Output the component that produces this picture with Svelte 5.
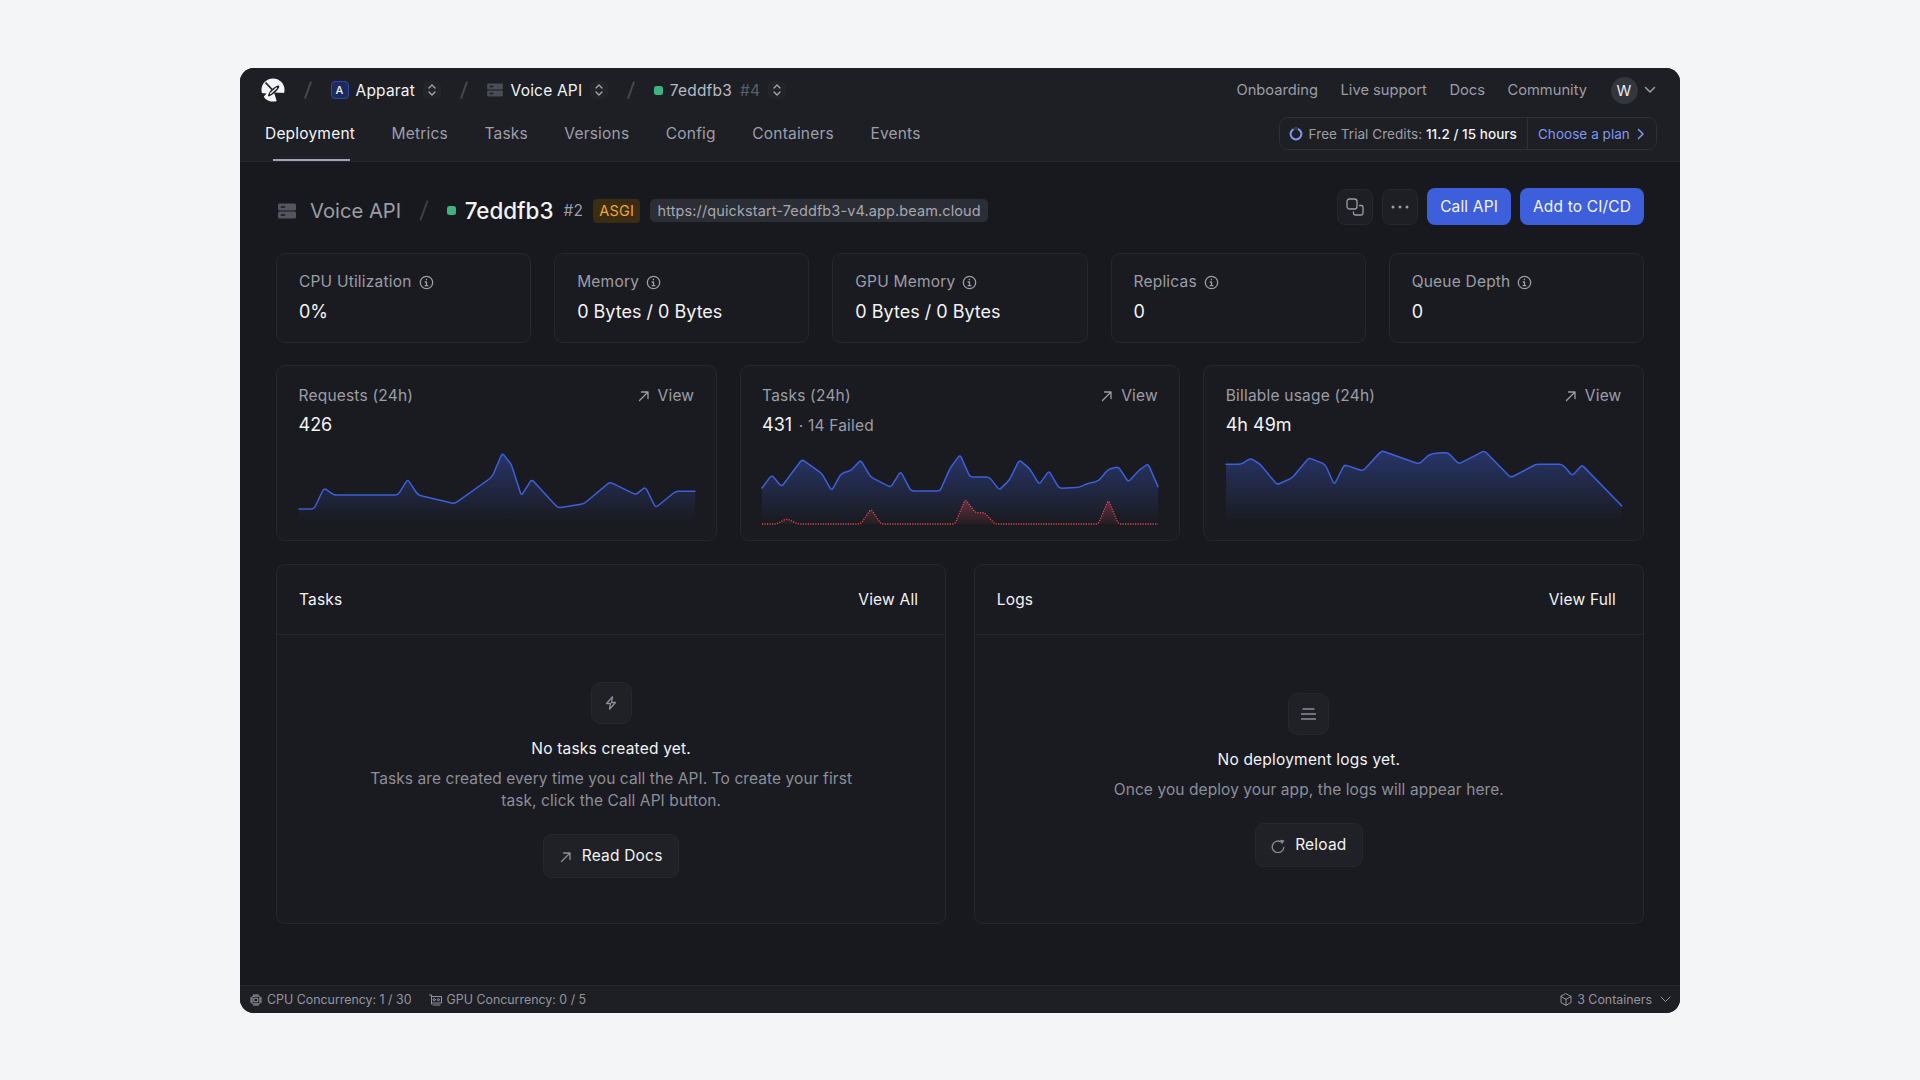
<script>
  const stats = [
    { label: 'CPU Utilization', value: '0%' },
    { label: 'Memory', value: '0 Bytes / 0 Bytes' },
    { label: 'GPU Memory', value: '0 Bytes / 0 Bytes' },
    { label: 'Replicas', value: '0' },
    { label: 'Queue Depth', value: '0' }
  ];

  const tabs = ['Deployment', 'Metrics', 'Tasks', 'Versions', 'Config', 'Containers', 'Events'];

  // points are read off the 3x crop, so one svg unit is a third of a pixel
  const charts = [
    {
      id: 'a', label: 'Requests (24h)', value: '426', x0: 85,
      line: [[85,450],[130,450],[160,387],[190,408],[382,408],[411,361],[442,408],[552,434],[664,354],[695,282],[722,316],[752,410],[783,361],[862,447],[940,434],[1018,369],[1095,407],[1124,384],[1155,446],[1215,397],[1273,397]]
    },
    {
      id: 'b', label: 'Tasks (24h)', value: '431', failed: '14 Failed', x0: 96,
      line: [[96,384],[125,345],[155,380],[216,298],[275,340],[305,392],[334,340],[362,332],[392,300],[422,351],[482,382],[512,334],[543,393],[630,393],[660,325],[690,284],[720,351],[778,351],[808,390],[838,360],[868,300],[898,325],[928,373],[957,332],[987,385],[1047,382],[1075,370],[1105,363],[1135,328],[1165,320],[1195,366],[1225,333],[1254,311],[1284,380]],
      red: [[96,492],[140,492],[170,476],[205,492],[392,492],[423,447],[453,492],[675,492],[706,418],[736,458],[763,458],[795,492],[1105,492],[1135,420],[1165,492],[1284,492]]
    },
    {
      id: 'c', label: 'Billable usage (24h)', value: '4h 49m', x0: 107,
      line: [[107,316],[151,316],[181,298],[210,316],[260,377],[305,357],[356,296],[404,316],[432,377],[462,317],[518,336],[574,275],[686,315],[716,287],[745,281],[774,281],[805,315],[882,275],[961,356],[1037,316],[1116,316],[1146,350],[1175,318],[1294,440]]
    }
  ];

  function smooth(p) {
    let d = `M${p[0][0]} ${p[0][1]}`;
    for (let i = 1; i < p.length - 1; i++) {
      const [x, y] = p[i];
      const a = p[i - 1], b = p[i + 1];
      const la = Math.hypot(a[0] - x, a[1] - y), lb = Math.hypot(b[0] - x, b[1] - y);
      const r = Math.min(9, la / 2, lb / 2);
      d += `L${x + (a[0] - x) * r / la} ${y + (a[1] - y) * r / la}`;
      d += `Q${x} ${y} ${x + (b[0] - x) * r / lb} ${y + (b[1] - y) * r / lb}`;
    }
    const e = p[p.length - 1];
    return d + `L${e[0]} ${e[1]}`;
  }

  function area(p, base) {
    return `${smooth(p)}L${p[p.length - 1][0]} ${base}L${p[0][0]} ${base}Z`;
  }
</script>

{#snippet chevrons()}
  <span class="updown">
    <svg width="10" height="14" viewBox="0 0 10 14"><path d="M2 5l3-3 3 3M2 9l3 3 3-3" /></svg>
  </span>
{/snippet}

{#snippet stack(w, h)}
  <svg class="stack" width={w} height={h} viewBox="0 0 18 16"><rect x="0" y="0.5" width="18" height="7" rx="1.5" /><rect x="0" y="8.5" width="18" height="7" rx="1.5" /><path class="dots" d="M3.5 4h3M3.5 12h3" /></svg>
{/snippet}

{#snippet arrow()}
  <svg class="arrow" width="12" height="12" viewBox="0 0 12 12"><path d="M1.5 10.5L10 2M3.5 2H10v6.5" /></svg>
{/snippet}

{#snippet info()}
  <svg class="info" width="15" height="15" viewBox="0 0 15 15"><circle cx="7.5" cy="7.5" r="6.2" /><path d="M7.5 7v3.6M6.2 7h1.3M6.2 10.7h2.6" /><circle class="dot" cx="7.4" cy="4.6" r="0.8" /></svg>
{/snippet}

<div class="page">
  <div class="window">
    <header>
      <div class="topbar">
        <div class="crumbs">
          <svg class="logo" width="24" height="24" viewBox="0 0 24 24">
            <circle class="w" cx="12" cy="12" r="11.5" />
            <path class="k" d="M13 14.500L24 15V20L18 24H16z" />
            <path class="k" d="M0 15L5.500 15.500 2 19.500H0z" />
            <path class="line" d="M4.500 4.500L11 11.500" />
            <path class="k" d="M7 18C7.500 14 12 9 17 7.500 18.500 7 18.500 8.500 18 9.500 16 13.500 11.500 17 8 18.500z" />
            <path class="cut" d="M9.500 15.500L15.500 10" />
          </svg>
          <span class="slash"></span>
          <span class="avatar-a">A</span>
          <span class="crumb">Apparat</span>
          {@render chevrons()}
          <span class="slash"></span>
          {@render stack(16, 14)}
          <span class="crumb">Voice API</span>
          {@render chevrons()}
          <span class="slash"></span>
          <span class="green"></span>
          <span class="crumb muted">7eddfb3</span>
          <span class="crumb faint">#4</span>
          {@render chevrons()}
        </div>
        <nav class="links">
          <span>Onboarding</span>
          <span>Live support</span>
          <span>Docs</span>
          <span>Community</span>
          <span class="user">W</span>
          <svg class="caret" width="12" height="8" viewBox="0 0 12 8"><path d="M1.5 1.5L6 6l4.5-4.5" /></svg>
        </nav>
      </div>
      <div class="tabbar">
        <div class="tabs">
          {#each tabs as t, i}
            <span class="tab" class:active={i === 0}>{t}</span>
          {/each}
        </div>
        <div class="credits">
          <div class="credit-info">
            <svg class="ring" width="14" height="14" viewBox="0 0 14 14"><circle class="ring-blue" cx="7" cy="7" r="5.4" /><path class="ring-gap" d="M4.500 2.200A5.400 5.400 0 0 1 9 2" /></svg>
            <span>Free Trial Credits: <b>11.2 / 15 hours</b></span>
          </div>
          <div class="plan">
            <span>Choose a plan</span>
            <svg width="8" height="12" viewBox="0 0 8 12"><path d="M1.5 1.5L6 6l-4.500 4.500" /></svg>
          </div>
        </div>
      </div>
    </header>

    <main>
      <div class="title-row">
        <div class="title">
          {@render stack(18, 16)}
          <span class="app-name">Voice API</span>
          <span class="title-slash"></span>
          <span class="green big"></span>
          <span class="hash">7eddfb3</span>
          <span class="num">#2</span>
          <span class="asgi">ASGI</span>
          <span class="url">https://quickstart-7eddfb3-v4.app.beam.cloud</span>
        </div>
        <div class="actions">
          <button class="icon-btn" aria-label="Copy">
            <svg width="18" height="18" viewBox="0 0 18 18"><rect x="1" y="1" width="10" height="10" rx="2.500" /><path d="M13.500 7.500h1.700a1.800 1.800 0 0 1 1.800 1.800v5.900a1.800 1.800 0 0 1-1.800 1.800H9.300a1.800 1.800 0 0 1-1.800-1.800V14" /></svg>
          </button>
          <button class="icon-btn" aria-label="More">
            <svg width="18" height="4" viewBox="0 0 18 4"><circle class="fill" cx="2" cy="2" r="1.500" /><circle class="fill" cx="9" cy="2" r="1.500" /><circle class="fill" cx="16" cy="2" r="1.500" /></svg>
          </button>
          <button class="primary">Call API</button>
          <button class="primary">Add to CI/CD</button>
        </div>
      </div>

      <div class="stats">
        {#each stats as s}
          <div class="card stat">
            <div class="label">{s.label} {@render info()}</div>
            <div class="value">{s.value}</div>
          </div>
        {/each}
      </div>

      <div class="charts">
        {#each charts as c}
          <div class="card chart">
            <div class="chart-head">
              <span class="label">{c.label}</span>
              <span class="view">{@render arrow()} View</span>
            </div>
            <div class="value">{c.value}{#if c.failed}<span class="failed">&nbsp;·&nbsp;{c.failed}</span>{/if}</div>
            <svg class="spark" width="398" height="72" viewBox="{c.x0 - 3} 270 1194 216">
              <defs>
                <linearGradient id="blue-{c.id}" x1="0" y1="0" x2="0" y2="1">
                  <stop offset="0" stop-color="#3d5fdc" stop-opacity="0.38" />
                  <stop offset="1" stop-color="#3d5fdc" stop-opacity="0" />
                </linearGradient>
                <linearGradient id="red-{c.id}" x1="0" y1="0" x2="0" y2="1">
                  <stop offset="0" stop-color="#e5484d" stop-opacity="0.32" />
                  <stop offset="1" stop-color="#e5484d" stop-opacity="0.06" />
                </linearGradient>
              </defs>
              <path d={area(c.line, 486)} style="fill: url(#blue-{c.id})" />
              {#if c.red}
                <path d={area(c.red, 492)} style="fill: url(#red-{c.id})" />
                <path d={smooth(c.red)} class="red-line" />
              {/if}
              <path d={smooth(c.line)} class="blue-line" />
            </svg>
          </div>
        {/each}
      </div>

      <div class="panels">
        <section class="card panel">
          <div class="panel-head">
            <span>Tasks</span>
            <span class="panel-link">View All</span>
          </div>
          <div class="empty">
            <div class="empty-icon">
              <svg width="12" height="14" viewBox="0 0 12 14"><path d="M7.500 0.800L1.500 7.500H5.500L4.500 13.200L10.500 6.500H6.500Z" /></svg>
            </div>
            <p class="empty-title">No tasks created yet.</p>
            <p class="empty-text">Tasks are created every time you call the API. To create your first task, click the Call API button.</p>
            <button class="ghost">{@render arrow()} Read Docs</button>
          </div>
        </section>
        <section class="card panel">
          <div class="panel-head">
            <span>Logs</span>
            <span class="panel-link">View Full</span>
          </div>
          <div class="empty">
            <div class="empty-icon">
              <svg width="15" height="12" viewBox="0 0 15 12"><path d="M2 1h11M0.500 6h14M0.500 11h14" /></svg>
            </div>
            <p class="empty-title">No deployment logs yet.</p>
            <p class="empty-text">Once you deploy your app, the logs will appear here.</p>
            <button class="ghost">
              <svg class="arrow" width="14" height="14" viewBox="0 0 14 14"><path d="M12.800 8.500A5.800 5.800 0 1 1 9.500 2.600" /><path class="fill" d="M9 0.800L13.500 1.500 11 5.300z" /></svg>
              Reload
            </button>
          </div>
        </section>
      </div>
    </main>

    <footer>
      <div class="foot-left">
        <span class="foot-item">
          <svg width="12" height="12" viewBox="0 0 12 12"><rect x="2" y="2" width="8" height="8" rx="1.500" /><rect x="4.200" y="4.200" width="3.600" height="3.600" /><path d="M4 0v2M6 0v2M8 0v2M4 10v2M6 10v2M8 10v2M0 4h2M0 6h2M0 8h2M10 4h2M10 6h2M10 8h2" /></svg>
          CPU Concurrency: 1 / 30
        </span>
        <span class="foot-item">
          <svg width="13" height="12" viewBox="0 0 13 12"><path d="M0.500 1h2v9M2.500 2.500h10v6.500h-10M4 11h7" /><circle cx="5.200" cy="5.700" r="1.100" /><circle cx="9.400" cy="5.700" r="1.100" /></svg>
          GPU Concurrency: 0 / 5
        </span>
      </div>
      <span class="foot-item">
        <svg width="12" height="13" viewBox="0 0 12 13"><path d="M6 0.700L11 3.500v6L6 12.300 1 9.500v-6zM1 3.500L6 6.300l5-2.800M6 6.300v6" /></svg>
        3 Containers
        <svg class="foot-caret" width="11" height="7" viewBox="0 0 11 7"><path d="M1 1l4.500 4.500L10 1" /></svg>
      </span>
    </footer>
  </div>
</div>

<style>
  :global(body) { background: #f4f5f7; font-family: Inter, "Liberation Sans", sans-serif; }
  .page { display: flex; justify-content: center; padding-top: 68px; height: 1080px; box-sizing: border-box; }
  .window {
    width: 1440px; height: 945px; display: flex; flex-direction: column;
    background: #18191e; border-radius: 14px; overflow: hidden; color: #f2f3f5; font-size: 15.500px; letter-spacing: 0.200px;
  }
  svg path, svg rect, svg circle { fill: none; stroke: currentColor; stroke-width: 1.3; stroke-linecap: round; stroke-linejoin: round; }
  svg .fill { fill: currentColor; stroke: none; }
  button { font-family: inherit; font-size: 15.500px; letter-spacing: 0.200px; cursor: pointer; }

  header { background: #1d1f25; border-bottom: 1px solid #26282e; height: 94px; box-sizing: border-box; }
  .topbar { height: 44px; display: flex; align-items: center; justify-content: space-between; padding: 0 24px 0 21px; }
  .crumbs { display: flex; align-items: center; }
  .logo .w { fill: #f4f5f7; stroke: none; }
  .logo .k { fill: #1d1f25; stroke: none; }
  .logo .line { stroke: #1d1f25; stroke-width: 1.800; stroke-linecap: butt; }
  .logo .cut { stroke: #f4f5f7; stroke-width: 1.300; }
  .slash { width: 1.500px; height: 18px; background: #45474f; transform: rotate(20deg); margin: 0 22px; }
  .avatar-a {
    width: 18px; height: 18px; box-sizing: border-box; border: 1px solid #2c4aa8; background: #1c2a5e; border-radius: 4px;
    font-size: 11px; font-weight: 500; display: flex; align-items: center; justify-content: center; margin-right: 7px;
  }
  .muted { color: #b9bac2; }
  .faint { color: #5c5e68; margin-left: 8px; }
  .updown { width: 18px; height: 18px; margin-left: 8px; display: flex; align-items: center; justify-content: center; background: #22242a; border-radius: 5px; color: #a6a7b0; }
  .stack { color: #4a4c56; margin-right: 8px; flex: none; }
  .stack rect { fill: currentColor; stroke: none; }
  .stack .dots { stroke: #1d1f25; stroke-width: 1.500; }
  .green { width: 9px; height: 9px; border-radius: 2.500px; background: #3fb27f; margin-right: 7px; }
  .links { display: flex; align-items: center; gap: 22.500px; color: #9c9da7; font-size: 14.700px; letter-spacing: 0; }
  .user { width: 27px; height: 27px; margin-left: 1px; border-radius: 50%; background: #34363e; color: #eceded; display: flex; align-items: center; justify-content: center; font-size: 15px; }
  .caret { margin-left: -16px; color: #9c9da7; }

  .tabbar { height: 49px; display: flex; align-items: flex-start; justify-content: space-between; padding: 0 23px 0 25px; }
  .tabs { display: flex; gap: 36.500px; }
  .tab { color: #9d9eaa; height: 49px; line-height: 44px; box-sizing: border-box; position: relative; }
  .tab.active { color: #f2f3f5; }
  .tab.active::after { content: ""; position: absolute; left: 8px; right: 5px; bottom: 0; height: 2px; background: #a1a3b3; }
  .credits { display: flex; height: 31px; margin-top: 5px; border: 1px solid #2e3037; border-radius: 9px; font-size: 13.500px; letter-spacing: 0.050px; align-items: stretch; }
  .credit-info { display: flex; align-items: center; gap: 6px; padding: 0 10px 0 9px; color: #9c9da7; border-right: 1px solid #2e3037; }
  .credit-info b { color: #f2f3f5; font-weight: 500; }
  .ring-blue { stroke: #7f97f0; stroke-width: 2; }
  .ring-gap { stroke: #34363e; stroke-width: 2.200; stroke-linecap: butt; }
  .plan { display: flex; align-items: center; gap: 6.800px; padding: 0 11.300px 0 10px; color: #7f97f0; }

  main { flex: 1; padding: 26px 36px 0; }
  .title-row { display: flex; align-items: flex-start; justify-content: space-between; height: 38px; margin-bottom: 26.500px; }
  .title { display: flex; align-items: center; height: 38px; padding-left: 2px; margin-top: 3.500px; }
  .title .stack { color: #53555f; margin-right: 14px; }
  .title .stack .dots { stroke: #18191e; }
  .app-name { font-size: 20.200px; letter-spacing: 0; color: #9c9da7; }
  .title-slash { width: 1.500px; height: 21px; background: #3d3f47; transform: rotate(20deg); margin: 0 22px; }
  .green.big { margin-right: 9px; }
  .hash { font-size: 22.400px; letter-spacing: 0; font-weight: 500; }
  .num { color: #9c9da7; margin: 0 10px; }
  .asgi { background: #3b2c12; color: #eda733; font-size: 14.500px; padding: 2px 6px; border-radius: 4px; margin-right: 10px; height: 20px; line-height: 20px; }
  .url { background: #2c2e35; color: #a6a7b2; font-size: 14.500px; letter-spacing: 0.110px; padding: 0 7.500px; border-radius: 5px; height: 23px; line-height: 23px; }
  .actions { display: flex; align-items: center; gap: 9px; }
  .icon-btn { width: 36px; height: 36px; padding: 0; display: flex; align-items: center; justify-content: center; background: #1d1f25; border: 1px solid #26282e; border-radius: 8px; color: #9c9da7; }
  .primary { height: 37px; padding: 0 13px; background: #3d5fdc; color: #f2f4fb; border: 0; border-radius: 8px; letter-spacing: 0.150px; }

  .card { background: #1a1b20; border: 1px solid #25272d; border-radius: 9px; box-sizing: border-box; }
  .stats { display: grid; grid-template-columns: repeat(5, minmax(0, 1fr)); gap: 22.860px; }
  .stat { height: 90px; padding: 18.500px 22px; }
  .label { color: #9c9da7; display: flex; align-items: center; gap: 7px; line-height: 20px; }
  .info { color: #9c9da7; }
  .info .dot { fill: currentColor; stroke: none; }
  .value { font-size: 18px; letter-spacing: 0; line-height: 22px; margin-top: 8.500px; }
  .charts { display: grid; grid-template-columns: repeat(3, minmax(0, 1fr)); gap: 22.860px; margin-top: 22.860px; }
  .chart { height: 175.500px; padding: 19.500px 21.500px; }
  .chart-head { display: flex; justify-content: space-between; line-height: 20px; }
  .view { color: #9c9da7; display: flex; align-items: center; gap: 8px; }
  .failed { color: #9c9da7; font-size: 15.500px; letter-spacing: 0.200px; margin-left: 2px; }
  .spark { display: block; margin: 13px 0 0 -1px; overflow: visible; }
  .spark path { stroke: none; }
  .spark .blue-line { fill: none; stroke: #3d5fdc; stroke-width: 4.500; }
  .spark .red-line { fill: none; stroke: #e5484d; stroke-width: 4; stroke-dasharray: 3.500 4; stroke-linecap: butt; }

  .panels { display: grid; grid-template-columns: 1fr 1fr; gap: 27.400px; margin-top: 23.500px; }
  .panel { height: 359.500px; display: flex; flex-direction: column; }
  .panel-head { height: 69.500px; flex: none; box-sizing: border-box; border-bottom: 1px solid #25272d; display: flex; align-items: center; justify-content: space-between; padding: 0 27px 0 22px; }
  .panel-link { color: #f2f3f5; }
  .empty { flex: 1; display: flex; flex-direction: column; align-items: center; justify-content: center; padding-top: 2px; }
  .empty-icon { width: 41px; height: 42px; box-sizing: border-box; border: 1px solid #26282e; background: #1f2127; border-radius: 10px; display: flex; align-items: center; justify-content: center; color: #8d8e99; }
  .empty-title { margin: 14.500px 0 0; font-weight: 400; line-height: 22px; }
  .empty-text { margin: 8px 0 0; max-width: 490px; text-align: center; color: #8d8e99; line-height: 22px; letter-spacing: 0.080px; }
  .ghost { margin-top: 21.500px; height: 44px; padding: 0 15.500px; display: flex; align-items: center; gap: 10px; background: #1f2127; border: 1px solid #26282e; border-radius: 9px; color: #f2f3f5; }
  .ghost .arrow { color: #8d8e99; margin-top: 2px; }
  .arrow { flex: none; }

  footer { height: 28px; flex: none; box-sizing: border-box; background: #1d1f25; border-top: 1px solid #26282e; display: flex; align-items: center; justify-content: space-between; padding: 0 9px 0 10px; color: #9395a0; font-size: 12.400px; letter-spacing: 0; }
  .foot-left { display: flex; gap: 17px; }
  .foot-item { display: flex; align-items: center; gap: 5px; }
  .foot-item svg { flex: none; }
  .foot-item svg path, .foot-item svg rect, .foot-item svg circle { stroke-width: 1; }
  .foot-caret { margin-left: 3px; }
  .caret path, .plan path { stroke-width: 1.500; }
</style>
